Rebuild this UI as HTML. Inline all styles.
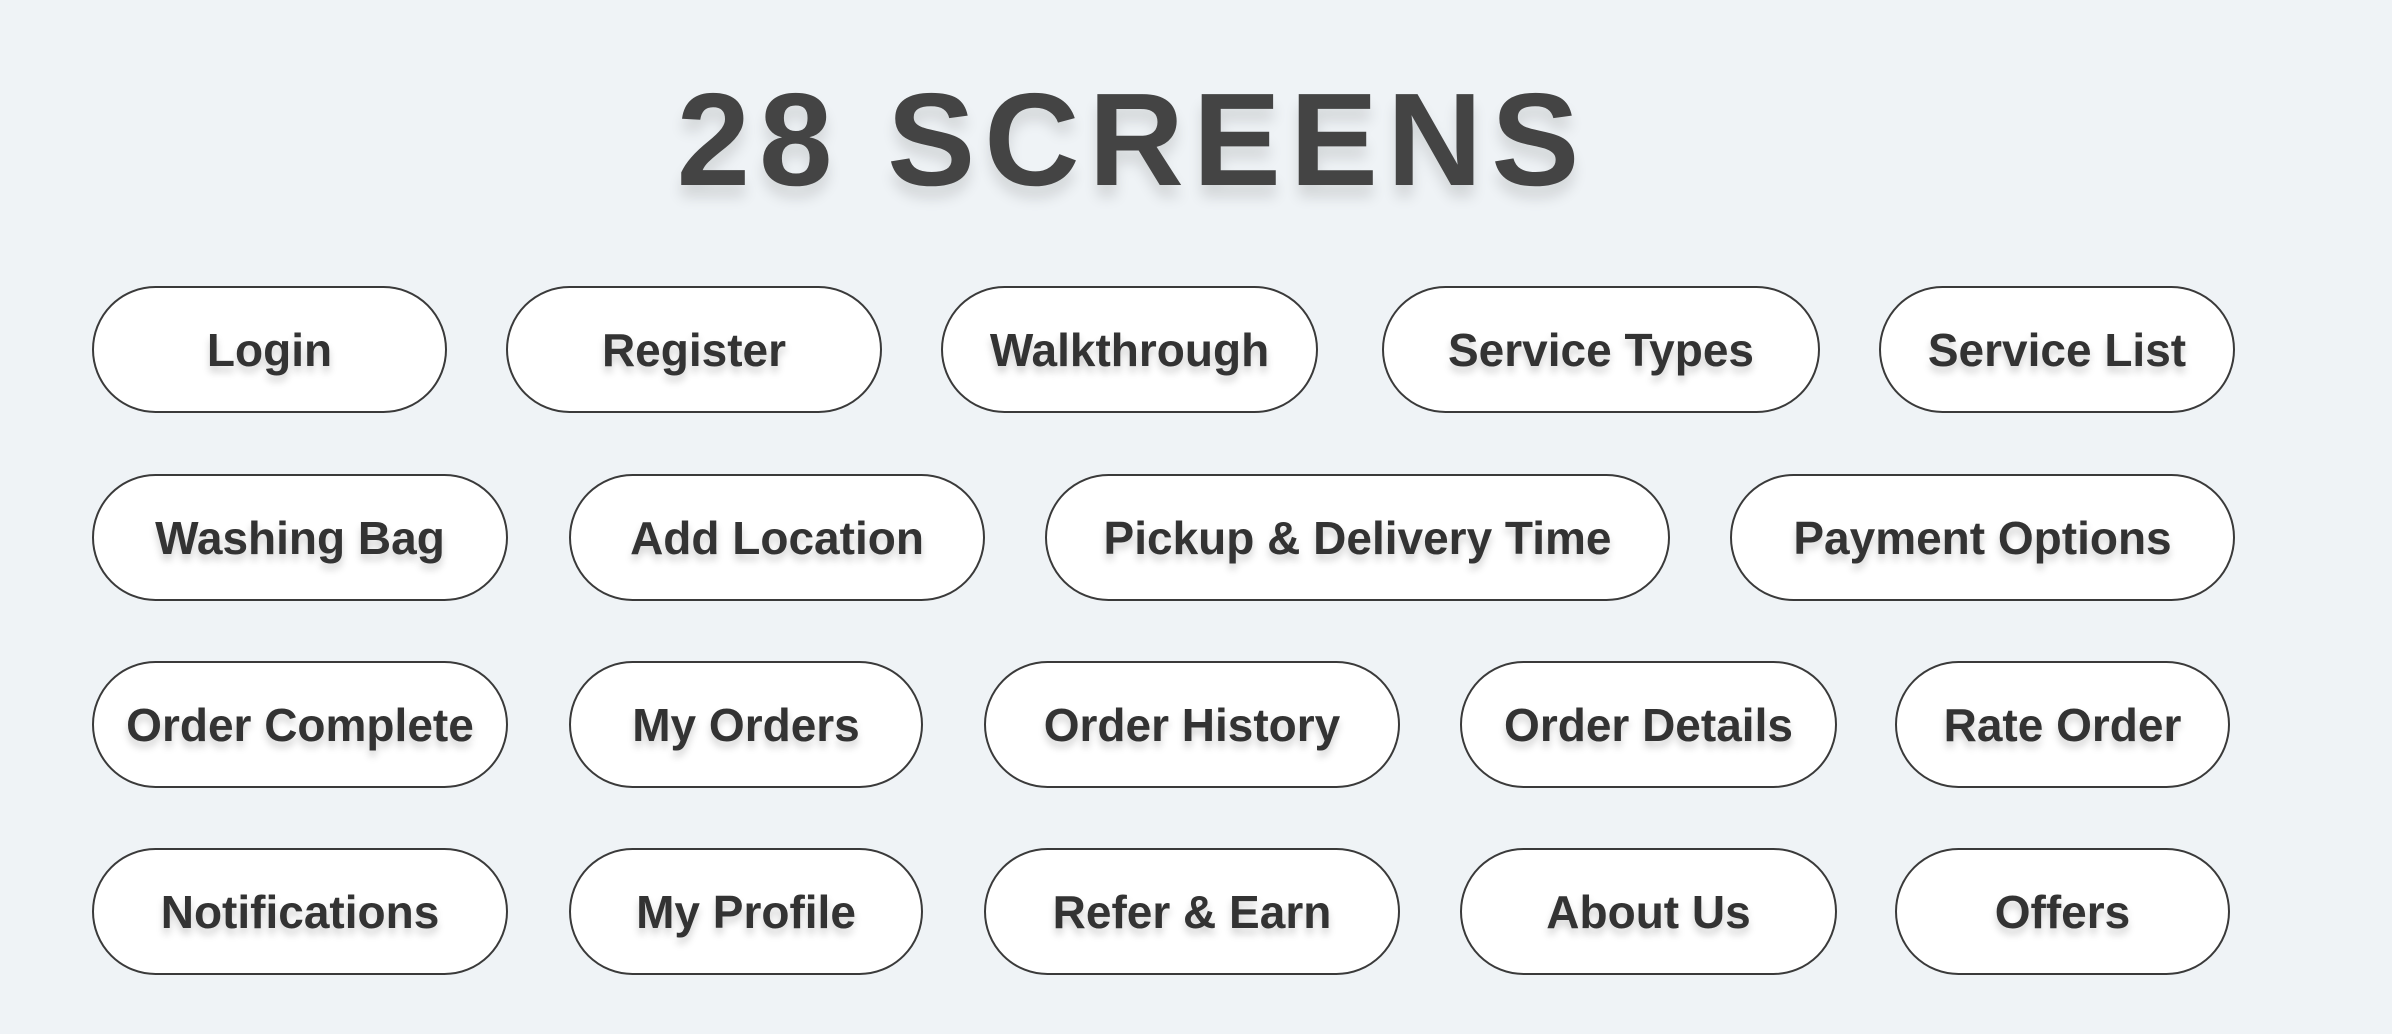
<!DOCTYPE html>
<html><head><style>
html,body{margin:0;padding:0}
body{width:2392px;height:1034px;background:#eff3f6;position:relative;overflow:hidden;font-family:"Liberation Sans",sans-serif}
.t{position:absolute;left:600px;width:1065px;top:70px;height:140px;text-align:center;font-size:132px;font-weight:bold;color:#444;letter-spacing:9px;line-height:140px;text-shadow:0 12px 14px rgba(0,0,0,.12);white-space:nowrap}
.p{position:absolute;box-sizing:border-box;height:127px;border:2px solid #3a3a3a;border-radius:64px;background:#fff;display:flex;align-items:center;justify-content:center;font-size:46px;color:#333;font-weight:bold;text-shadow:0 6px 8px rgba(0,0,0,.18);white-space:nowrap}
</style></head><body>
<div class="t">28 SCREENS</div>
<div class="p" style="top:286px;left:92px;width:355px">Login</div>
<div class="p" style="top:286px;left:506px;width:376px">Register</div>
<div class="p" style="top:286px;left:941px;width:377px">Walkthrough</div>
<div class="p" style="top:286px;left:1382px;width:438px">Service Types</div>
<div class="p" style="top:286px;left:1879px;width:356px">Service List</div>

<div class="p" style="top:474px;left:92px;width:416px">Washing Bag</div>
<div class="p" style="top:474px;left:569px;width:416px">Add Location</div>
<div class="p" style="top:474px;left:1045px;width:625px">Pickup &amp; Delivery Time</div>
<div class="p" style="top:474px;left:1730px;width:505px">Payment Options</div>

<div class="p" style="top:661px;left:92px;width:416px">Order Complete</div>
<div class="p" style="top:661px;left:569px;width:354px">My Orders</div>
<div class="p" style="top:661px;left:984px;width:416px">Order History</div>
<div class="p" style="top:661px;left:1460px;width:377px">Order Details</div>
<div class="p" style="top:661px;left:1895px;width:335px">Rate Order</div>

<div class="p" style="top:848px;left:92px;width:416px">Notifications</div>
<div class="p" style="top:848px;left:569px;width:354px">My Profile</div>
<div class="p" style="top:848px;left:984px;width:416px">Refer &amp; Earn</div>
<div class="p" style="top:848px;left:1460px;width:377px">About Us</div>
<div class="p" style="top:848px;left:1895px;width:335px">Offers</div>
</body></html>
